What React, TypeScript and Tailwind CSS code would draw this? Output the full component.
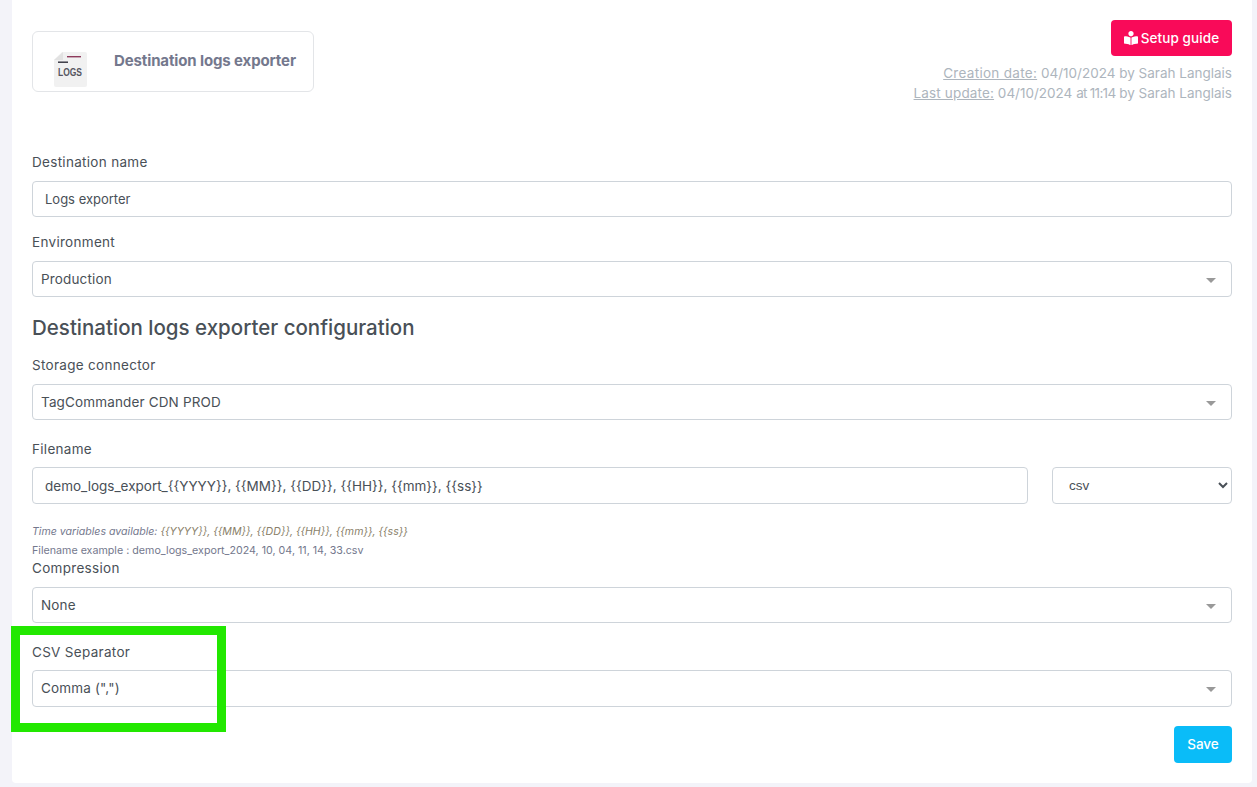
import { FaBookReader } from "react-icons/fa";

type FieldProps = {
  label: string;
  value: string;
  top?: string;
  tall?: boolean;
};

function Label({ children, className = "" }: { children: string; className?: string }) {
  return <label className={`block h-[18px] text-[13.5px] leading-[18px] tracking-[0.3px] text-[#495057] ${className}`}>{children}</label>;
}

function SelectField({ label, value, top = "mt-4", tall = false }: FieldProps) {
  return (
    <div className={top}>
      <Label className={tall ? "mb-[9px]" : "mb-[10px]"}>{label}</Label>
      <div
        className={`flex items-center justify-between rounded border border-[#ced4da] bg-white pl-2 pr-[15px] text-[13.5px] tracking-[0.15px] text-[#495057] ${
          tall ? "h-[37px]" : "h-9"
        }`}
      >
        <span>{value}</span>
        <span className="mt-0.5 h-0 w-0 border-x-[5px] border-t-[5px] border-x-transparent border-t-[#999]" />
      </div>
    </div>
  );
}

function LogsIcon() {
  return (
    <svg width="33" height="35" viewBox="0 0 33 35" className="mt-5 shrink-0 self-start">
      <path d="M8 0 H31 Q33 0 33 2 V33 Q33 35 31 35 H2 Q0 35 0 33 V8 Z" fill="#f1f1f1" />
      <path d="M9 0 L0 8 H9 Z" fill="#e2e2e2" />
      <rect x="13" y="4" width="14" height="1.4" fill="#8e3b5c" />
      <rect x="4" y="9.5" width="10" height="1.4" fill="#2f2f3a" />
      <text x="16" y="24" textAnchor="middle" fontSize="10.5" fontWeight="700" fill="#55555f" fontFamily="'Liberation Sans', sans-serif" textLength="24" lengthAdjust="spacingAndGlyphs">
        LOGS
      </text>
    </svg>
  );
}

export default function App() {
  return (
    <div className="relative min-h-[787px] overflow-hidden bg-[#f3f3f9] pl-3 pr-[5px] font-['Inter','Noto_Sans',sans-serif]">
      <main className="h-[783px] rounded-b bg-white px-5 pt-5 pb-5">
        <header className="flex h-[124px] items-start justify-between">
          <div className="mt-[11px] flex h-[61px] w-[282px] items-center rounded-md border border-[#e3e5e8] pl-[21px]">
            <LogsIcon />
            <span className="ml-[27px] text-[15px] font-bold tracking-[-0.12px] text-[#74788d]">Destination logs exporter</span>
          </div>
          <div className="flex flex-col items-end">
            <button className="flex h-9 w-[121px] items-center justify-center gap-[3px] rounded bg-[#f90a59] text-[13.5px] font-medium tracking-[0.1px] text-white">
              <FaBookReader className="h-[14px] w-[14px]" />
              Setup guide
            </button>
            <p className="mt-[7px] text-[13.5px] leading-5 text-[#adb5bd]">
              <span className="tracking-[0.3px] underline">Creation date:</span> 04/10/2024 by Sarah Langlais
            </p>
            <p className="text-[13.5px] leading-5 text-[#adb5bd]">
              <span className="tracking-[0.15px] underline">Last update:</span> 04/10/2024 <span className="tracking-[-0.7px]">at 11:14</span> by Sarah Langlais
            </p>
          </div>
        </header>

        <div className="mt-[9px]">
          <Label className="mb-[10px]">Destination name</Label>
          <input
            readOnly
            value="Logs exporter"
            className="block h-9 w-full rounded border border-[#ced4da] px-3 text-[13px] text-[#495057] outline-none"
          />
        </div>

        <SelectField label="Environment" value="Production" />

        <h2 className="mt-[17px] h-7 text-[20.5px] leading-7 font-medium text-[#495057]">Destination logs exporter configuration</h2>

        <SelectField label="Storage connector" value="TagCommander CDN PROD" top="mt-[14px]" />

        <div className="mt-5">
          <Label className="mb-[9px]">Filename</Label>
          <div className="flex gap-6">
            <input
              readOnly
              value="demo_logs_export_{{YYYY}}, {{MM}}, {{DD}}, {{HH}}, {{mm}}, {{ss}}"
              className="block h-[37px] min-w-0 flex-1 rounded border border-[#ced4da] px-3 text-[13.5px] text-[#495057] outline-none"
            />
            <select className="h-[37px] w-[180px] rounded border border-[#ced4da] bg-white pl-3 font-['Liberation_Sans',sans-serif] text-[13.5px] text-[#495057] outline-none">
              <option>csv</option>
            </select>
          </div>
        </div>

        <p className="mt-5 h-4 text-[10.6px] leading-4 text-[#74788d] italic">
          Time variables available: <span className="text-[#8a7f6a]">{"{{YYYY}}, {{MM}}, {{DD}}, {{HH}}, {{mm}}, {{ss}}"}</span>
        </p>
        <p className="mt-1 h-[14px] text-[10.7px] leading-[14px] text-[#74788d]">Filename example : demo_logs_export_2024, 10, 04, 11, 14, 33.csv</p>

        <SelectField label="Compression" value="None" top="mt-px" />
        <SelectField label="CSV Separator" value={'Comma (",")'} top="mt-5" tall />

        <div className="mt-[19px] flex justify-end">
          <button className="h-[37px] w-[58px] rounded bg-[#0abcf8] text-[13.5px] font-medium text-white">Save</button>
        </div>
      </main>

      <div className="pointer-events-none absolute top-[626px] left-[11px] h-[106px] w-[215px] border-[9px] border-[#22e800]" />
    </div>
  );
}
